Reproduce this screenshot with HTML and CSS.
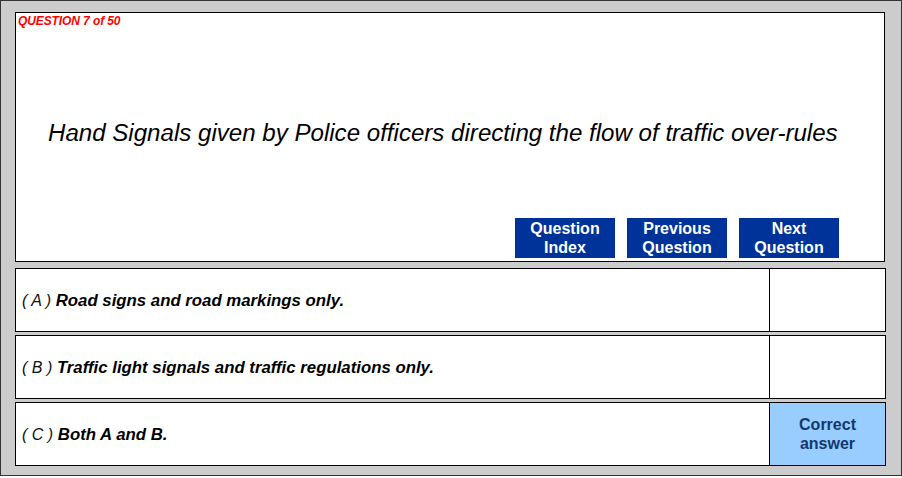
FILE: index.html
```html
<!DOCTYPE html>
<html>
<head>
<meta charset="utf-8">
<link rel="stylesheet" href="styles.css">
</head>
<body>
<div class="frame">
  <div class="question-box">
    <div class="counter">QUESTION 7 of 50</div>
    <div class="question">Hand Signals given by Police officers directing the flow of traffic over-rules</div>
    <div class="nav">
      <a class="btn">Question<br>Index</a>
      <a class="btn">Previous<br>Question</a>
      <a class="btn">Next<br>Question</a>
    </div>
  </div>
  <div class="options">
    <div class="option">
      <div class="opt-text"><span class="line"><span class="letter">( A )</span> <b>Road signs and road markings only.</b></span></div>
      <div class="opt-mark"></div>
    </div>
    <div class="option">
      <div class="opt-text"><span class="line"><span class="letter">( B )</span> <b>Traffic light signals and traffic regulations only.</b></span></div>
      <div class="opt-mark"></div>
    </div>
    <div class="option">
      <div class="opt-text"><span class="line"><span class="letter">( C )</span> <b>Both A and B.</b></span></div>
      <div class="opt-mark correct">Correct<br>answer</div>
    </div>
  </div>
</div>
</body>
</html>
```

FILE: styles.css
```css
* { box-sizing: border-box; }
html, body { margin: 0; padding: 0; background: #fff; }
body { font-family: "Liberation Sans", Arial, sans-serif; }

.frame {
  width: 902px;
  height: 476px;
  border: 1px solid #333;
  background: #cccccc;
  padding: 11px 0 0 14px;
  display: flex;
  flex-direction: column;
}

.question-box {
  width: 870px;
  height: 250px;
  border: 1px solid #000;
  background: #fff;
  display: flex;
  flex-direction: column;
  padding: 1px 45px 3px 2px;
}

.counter {
  color: #ff0000;
  font-size: 12px;
  line-height: 14px;
  font-weight: bold;
  font-style: italic;
  letter-spacing: -0.1px;
}

.question {
  margin-top: 91px;
  font-size: 24.1px;
  line-height: 28px;
  font-style: italic;
  color: #000;
  padding-left: 30px;
  white-space: nowrap;
}

.nav {
  margin-top: auto;
  display: flex;
  justify-content: flex-end;
  gap: 12px;
}

.btn {
  width: 100px;
  height: 40px;
  background: #003399;
  color: #fff;
  font-weight: bold;
  font-size: 16px;
  line-height: 19px;
  text-align: center;
  padding-top: 1px;
}

.options {
  margin-top: 6px;
  display: flex;
  flex-direction: column;
  gap: 3px;
}

.option {
  width: 871px;
  height: 64px;
  border: 1px solid #000;
  background: #fff;
  display: flex;
}

.opt-text {
  flex: 1;
  display: flex;
  align-items: center;
  padding-left: 6px;
  padding-top: 2px;
  font-size: 16.8px;
  font-style: italic;
  color: #000;
  white-space: pre;
}

.letter {
  font-size: 16px;
  font-weight: normal;
  color: #111;
}

.opt-text b { font-weight: bold; }

.opt-mark {
  width: 116px;
  border-left: 1px solid #000;
}

.opt-mark.correct {
  background: #99ccff;
  color: #123a6e;
  font-weight: bold;
  font-size: 16px;
  line-height: 19px;
  text-align: center;
  display: flex;
  align-items: center;
  justify-content: center;
}
```
